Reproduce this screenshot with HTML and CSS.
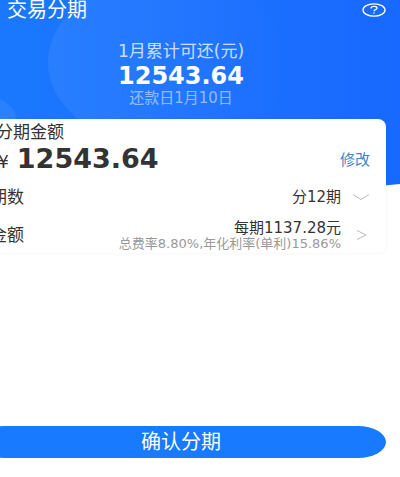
FILE: index.html
```html
<!DOCTYPE html>
<html lang="zh-CN">
<head>
<meta charset="utf-8">
<meta name="viewport" content="width=device-width, initial-scale=1">
<title>交易分期</title>
<link rel="stylesheet" href="styles.css">
</head>
<body>
<div class="page">
  <svg class="backdrop" viewBox="0 0 400 188" preserveAspectRatio="none" aria-hidden="true">
    <defs>
      <linearGradient id="base" x1="0" y1="0" x2="1" y2="0">
        <stop offset="0" stop-color="#1a78ff"/>
        <stop offset="0.55" stop-color="#1c71ff"/>
        <stop offset="1" stop-color="#1769ff"/>
      </linearGradient>
      <linearGradient id="glow" x1="0" y1="0" x2="1" y2="0">
        <stop offset="0" stop-color="#fff" stop-opacity="0.06"/>
        <stop offset="1" stop-color="#fff" stop-opacity="0"/>
      </linearGradient>
    </defs>
    <path d="M0 0H400V184Q300 194 200 194Q100 194 0 184Z" fill="url(#base)"/>
    <ellipse cx="168" cy="62" rx="120" ry="86" fill="url(#glow)"/>
    <ellipse cx="-10" cy="119" rx="26" ry="21" fill="#fff" fill-opacity="0.07"/>
  </svg>
  <header class="topbar">
    <h1 class="title">交易分期</h1>
    <button class="help" type="button" aria-label="帮助">
      <svg width="24" height="14" viewBox="0 0 24 14" fill="none" stroke="#fff" aria-hidden="true">
        <ellipse cx="12" cy="7" rx="11" ry="6.2" stroke-width="1.3"/>
        <path d="M9 5.4C9 3.9 10.3 3.4 12 3.4S15 4 15 5.2C15 6.7 12 6.7 12 8.3" stroke-width="1.3"/>
        <path d="M11.2 10H12.8" stroke-width="1.2"/>
      </svg>
    </button>
  </header>
  <section class="summary">
    <p class="caption">1月累计可还(元)</p>
    <p class="total">12543.64</p>
    <p class="due">还款日1月10日</p>
  </section>
  <main class="card">
    <h2 class="label heading">分期金额</h2>
    <div class="row amount-row">
      <p class="amount"><span class="yen">¥</span>12543.64</p>
      <a class="edit" href="#edit">修改</a>
    </div>
    <div class="row term-row">
      <span class="label">期数</span>
      <button class="choice" type="button">
        <span class="value">分12期</span>
        <svg width="18" height="8" viewBox="0 0 18 8" fill="none" stroke="#bbb" aria-hidden="true"><path d="M1 1.5L9 6.5L17 1.5"/></svg>
      </button>
    </div>
    <div class="row each-row">
      <span class="label">金额</span>
      <button class="choice" type="button">
        <span class="detail">
          <span class="value">每期1137.28元</span>
          <span class="note">总费率8.80%,年化利率(单利)15.86%</span>
        </span>
        <svg width="18" height="12" viewBox="0 0 18 12" fill="none" stroke="#bbb" aria-hidden="true"><path d="M5 1.5L14 6L5 10.5"/></svg>
      </button>
    </div>
  </main>
  <button class="confirm" type="button">确认分期</button>
</div>
</body>
</html>
```
FILE: styles.css
```css
* {
  box-sizing: border-box;
}

body {
  margin: 0;
  background: #fff;
  color: #333;
  font-family: "DejaVu Sans", "Noto Sans CJK SC", sans-serif;
}

h1, h2, p {
  margin: 0;
  font-weight: 400;
}

button {
  padding: 0;
  border: 0;
  background: none;
  color: inherit;
  font: inherit;
}

.page {
  position: relative;
  display: flex;
  flex-direction: column;
  min-height: 100vh;
  padding: 0 14px 19px 0;
  overflow: hidden;
}

.backdrop {
  position: absolute;
  z-index: -1;
  top: 0;
  left: 0;
  width: 100%;
  height: 188px;
}

.topbar {
  display: flex;
  align-items: center;
  justify-content: space-between;
  height: 20px;
  padding-left: 7px;
  color: #fff;
}

.title {
  font-size: 20px;
  line-height: 20px;
}

.help {
  display: flex;
}

.summary {
  display: flex;
  flex-direction: column;
  align-items: center;
  height: 99px;
  padding-top: 19px;
  margin-right: 24px;
  color: #fff;
}

.caption {
  font-size: 17px;
  line-height: 24px;
  opacity: 0.75;
}

.total {
  font-size: 24px;
  font-weight: 700;
  line-height: 26px;
}

.due {
  font-size: 15px;
  line-height: 18px;
  opacity: 0.5;
}

.card {
  margin-left: -20px;
  padding: 3px 16px 0 10px;
  border-radius: 8px;
  background: #fff;
  box-shadow: 0 0 3px rgba(0, 0, 0, 0.06);
}

.label {
  font-size: 17px;
  line-height: 20px;
}

.heading {
  padding-left: 6px;
}

.row {
  display: flex;
  align-items: center;
  justify-content: space-between;
}

.amount-row {
  height: 36px;
}

.amount {
  display: flex;
  align-items: baseline;
  gap: 8px;
  padding-left: 8px;
  font-size: 27px;
  font-weight: 700;
  line-height: 32px;
}

.yen {
  font-size: 17px;
  font-weight: 400;
}

.edit {
  color: #3b87c8;
  font-size: 15px;
  line-height: 20px;
  text-decoration: none;
}

.term-row {
  height: 38px;
}

.each-row {
  height: 37px;
}

.choice {
  display: flex;
  align-items: center;
  gap: 11px;
}

.value {
  font-size: 15px;
  line-height: 18px;
}

.detail {
  display: flex;
  flex-direction: column;
  align-items: flex-end;
}

.note {
  color: #999;
  font-size: 13px;
  line-height: 14px;
}

.confirm {
  height: 32px;
  margin-top: auto;
  margin-left: -24px;
  border-radius: 28px / 16px;
  background: #187aff;
  color: #fff;
  font-size: 20px;
  line-height: 32px;
}
```
